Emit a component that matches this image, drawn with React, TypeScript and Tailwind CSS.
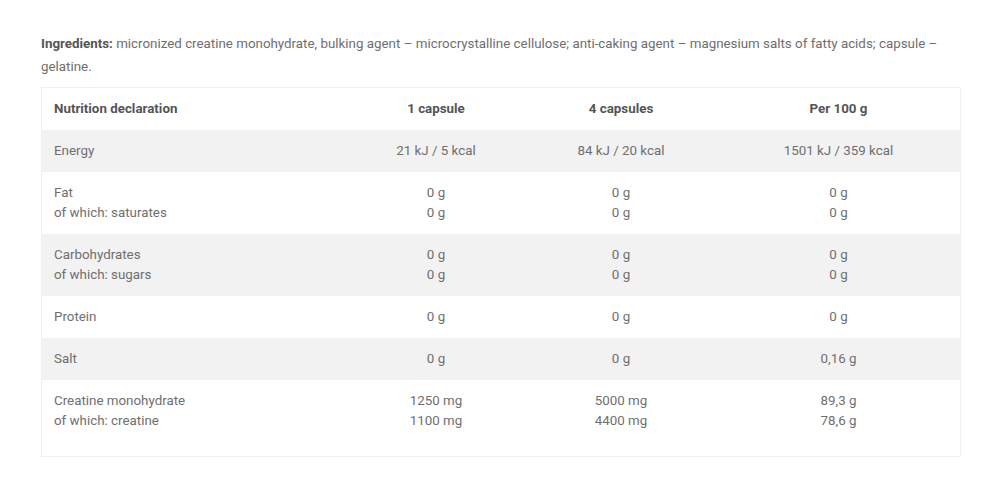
const rows: { label: string[]; a: string[]; b: string[]; c: string[] }[] = [
  { label: ['Energy'], a: ['21 kJ / 5 kcal'], b: ['84 kJ / 20 kcal'], c: ['1501 kJ / 359 kcal'] },
  { label: ['Fat', 'of which: saturates'], a: ['0 g', '0 g'], b: ['0 g', '0 g'], c: ['0 g', '0 g'] },
  { label: ['Carbohydrates', 'of which: sugars'], a: ['0 g', '0 g'], b: ['0 g', '0 g'], c: ['0 g', '0 g'] },
  { label: ['Protein'], a: ['0 g'], b: ['0 g'], c: ['0 g'] },
  { label: ['Salt'], a: ['0 g'], b: ['0 g'], c: ['0,16 g'] },
  {
    label: ['Creatine monohydrate', 'of which: creatine'],
    a: ['1250 mg', '1100 mg'],
    b: ['5000 mg', '4400 mg'],
    c: ['89,3 g', '78,6 g'],
  },
];

function Lines({ items }: { items: string[] }) {
  return (
    <>
      {items.map((t, i) => (
        <div key={i}>{t}</div>
      ))}
    </>
  );
}

export default function App() {
  return (
    <div className="min-h-[497px] bg-white px-[41px] pt-[32px] font-['Roboto',sans-serif] text-[13.35px] text-[#6f6f6f]">
      <p className="leading-[23px]">
        <strong className="font-bold text-[#555]">Ingredients:</strong> micronized creatine monohydrate, bulking
        agent – microcrystalline cellulose; anti-caking agent – magnesium salts of fatty acids; capsule – gelatine.
      </p>

      <div className="mt-[9px] w-[920px] border border-[#f0f0f0] pb-[14px]">
        <table className="w-full table-fixed border-collapse leading-[20px]">
          <colgroup>
            <col className="w-[305px]" />
            <col className="w-[178px]" />
            <col className="w-[192px]" />
            <col />
          </colgroup>
          <thead>
            <tr className="font-bold text-[#555]">
              <th className="px-3 py-[11px] text-left">Nutrition declaration</th>
              <th className="py-[11px] text-center">1 capsule</th>
              <th className="py-[11px] text-center">4 capsules</th>
              <th className="py-[11px] text-center">Per 100 g</th>
            </tr>
          </thead>
          <tbody>
            {rows.map((r, i) => (
              <tr key={i} className={i % 2 === 0 ? 'bg-[#f2f2f2]' : 'bg-white'}>
                <td className="px-3 py-[11px] align-top">
                  <Lines items={r.label} />
                </td>
                <td className="py-[11px] text-center align-top">
                  <Lines items={r.a} />
                </td>
                <td className="py-[11px] text-center align-top">
                  <Lines items={r.b} />
                </td>
                <td className="py-[11px] text-center align-top">
                  <Lines items={r.c} />
                </td>
              </tr>
            ))}
          </tbody>
        </table>
      </div>
    </div>
  );
}
